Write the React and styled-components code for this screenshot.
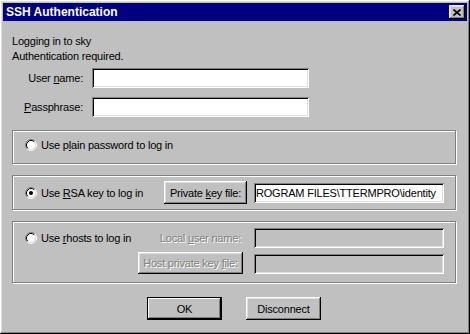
import React from 'react';
import styled, { createGlobalStyle, css } from 'styled-components';

const GlobalStyle = createGlobalStyle`
  html, body {
    margin: 0;
    padding: 0;
    background: #c0c0c0;
  }
`;

const raised = css`
  box-shadow: inset -1px -1px #000, inset 1px 1px #fff,
    inset -2px -2px #808080, inset 2px 2px #dfdfdf;
`;

const sunken = css`
  box-shadow: inset 1px 1px #808080, inset -1px -1px #fff,
    inset 2px 2px #000, inset -2px -2px #dfdfdf;
`;

const Window = styled.div`
  width: 470px;
  height: 334px;
  box-sizing: border-box;
  padding: 3px;
  background: #c0c0c0;
  display: flex;
  flex-direction: column;
  font-family: "Liberation Sans", Arial, sans-serif;
  font-size: 11px;
  letter-spacing: -0.2px;
  color: #000;
  ${raised}
`;

const TitleBar = styled.div`
  height: 18px;
  background: #000080;
  color: #fff;
  display: flex;
  align-items: center;
  justify-content: space-between;
  padding: 0 2px 0 3px;
  font-weight: bold;
  font-size: 12px;
  letter-spacing: 0;
`;

const CloseButton = styled.div`
  width: 16px;
  height: 14px;
  background: #c0c0c0;
  display: flex;
  align-items: center;
  justify-content: center;
  ${raised}
`;

const Body = styled.div`
  padding: 13px 11px 0 9px;
  display: flex;
  flex-direction: column;
`;

const Message = styled.div`
  line-height: 15px;
`;

const FieldGrid = styled.div`
  margin-top: 4px;
  display: grid;
  grid-template-columns: 71px 217px;
  column-gap: 9px;
  row-gap: 9px;
  align-items: center;
`;

const Label = styled.label`
  text-align: right;
  white-space: nowrap;
  padding-right: ${(p) => p.$pad || 0}px;
  color: ${(p) => (p.$disabled ? '#808080' : '#000')};
  text-shadow: ${(p) => (p.$disabled ? '1px 1px #fff' : 'none')};
`;

const Field = styled.input`
  box-sizing: border-box;
  width: ${(p) => p.$w || 217}px;
  height: 20px;
  border: none;
  outline: none;
  margin: 0 0 0 ${(p) => p.$ml || 0}px;
  padding: 0 2px;
  font: inherit;
  letter-spacing: -0.2px;
  color: #000;
  background: ${(p) => (p.disabled ? '#c0c0c0' : '#fff')};
  align-self: ${(p) => (p.$bottom ? 'end' : 'auto')};
  ${sunken}
`;

const Group = styled.div`
  box-sizing: border-box;
  width: 444px;
  height: ${(p) => p.$h}px;
  margin-top: ${(p) => p.$mt}px;
  border: 1px solid #808080;
  box-shadow: inset 1px 1px #fff, 1px 1px #fff;
`;

const SingleRow = styled(Group)`
  display: flex;
  align-items: center;
  padding: 0 10px ${(p) => p.$pb || 0}px 12px;
`;

const RhostsGrid = styled(Group)`
  display: grid;
  grid-template-columns: 102px 105px 190px;
  grid-template-rows: 20px 22px;
  column-gap: 11px;
  row-gap: 4px;
  padding: 6px 10px 0 12px;
  align-items: center;
`;

const Option = styled.div`
  display: flex;
  align-items: center;
  gap: 4px;
  width: ${(p) => (p.$w ? `${p.$w}px` : 'auto')};
  white-space: nowrap;
`;

const RadioSvg = styled.svg`
  flex-shrink: 0;
  display: block;
`;

const PushButton = styled.div`
  box-sizing: border-box;
  height: ${(p) => p.$h || 23}px;
  width: ${(p) => p.$w}px;
  background: #c0c0c0;
  display: flex;
  align-items: center;
  justify-content: center;
  white-space: nowrap;
  color: ${(p) => (p.$disabled ? '#808080' : '#000')};
  text-shadow: ${(p) => (p.$disabled ? '1px 1px #fff' : 'none')};
  ${(p) =>
    p.$default
      ? css`
          box-shadow: inset 0 0 0 1px #000, inset -2px -2px #000,
            inset 2px 2px #fff, inset -3px -3px #808080;
        `
      : raised}
`;

const ButtonRow = styled.div`
  margin-top: 14px;
  display: flex;
  justify-content: center;
  gap: 24px;
`;

const Spacer = styled.div``;

const Radio = ({ checked }) => (
  <RadioSvg width="12" height="12" viewBox="0 0 12 12">
    <circle cx="6" cy="6" r="4.5" fill="#fff" />
    <path d="M2.11 9.89 A5.5 5.5 0 0 1 9.89 2.11" fill="none" stroke="#808080" strokeWidth="1" />
    <path d="M9.89 2.11 A5.5 5.5 0 0 1 2.11 9.89" fill="none" stroke="#fff" strokeWidth="1" />
    <path d="M2.82 9.18 A4.5 4.5 0 0 1 9.18 2.82" fill="none" stroke="#000" strokeWidth="1" />
    <path d="M9.18 2.82 A4.5 4.5 0 0 1 2.82 9.18" fill="none" stroke="#dfdfdf" strokeWidth="1" />
    {checked && <circle cx="6" cy="6" r="2" fill="#000" />}
  </RadioSvg>
);

const App = () => (
  <>
    <GlobalStyle />
    <Window>
      <TitleBar>
        <span>SSH Authentication</span>
        <CloseButton>
          <svg width="8" height="7" viewBox="0 0 8 7">
            <path d="M0.5 0.5 L7.5 6.5 M7.5 0.5 L0.5 6.5" stroke="#000" strokeWidth="1.6" />
          </svg>
        </CloseButton>
      </TitleBar>
      <Body>
        <Message>Logging in to sky</Message>
        <Message>Authentication required.</Message>
        <FieldGrid>
          <Label>User <u>n</u>ame:</Label>
          <Field />
          <Label><u>P</u>assphrase:</Label>
          <Field type="password" />
        </FieldGrid>

        <SingleRow $h={34} $mt={13} $pb={4}>
          <Option>
            <Radio />
            <span>Use p<u>l</u>ain password to log in</span>
          </Option>
        </SingleRow>

        <SingleRow $h={35} $mt={11}>
          <Option $w={139}>
            <Radio checked />
            <span>Use <u>R</u>SA key to log in</span>
          </Option>
          <PushButton $w={83}>
            <span>Private <u>k</u>ey file:</span>
          </PushButton>
          <Field $w={190} $ml={7} defaultValue="ROGRAM FILES\TTERMPRO\identity" readOnly />
        </SingleRow>

        <RhostsGrid $h={62} $mt={11}>
          <Option>
            <Radio />
            <span>Use <u>r</u>hosts to log in</span>
          </Option>
          <Label $disabled $pad={2}>Local <u>u</u>ser name:</Label>
          <Field $w={190} disabled />
          <Spacer />
          <PushButton $w={105} $h={22} $disabled>
            <span>Host private key <u>f</u>ile:</span>
          </PushButton>
          <Field $w={190} $bottom disabled />
        </RhostsGrid>

        <ButtonRow>
          <PushButton $w={75} $default>OK</PushButton>
          <PushButton $w={75}>Disconnect</PushButton>
        </ButtonRow>
      </Body>
    </Window>
  </>
);

export default App;
